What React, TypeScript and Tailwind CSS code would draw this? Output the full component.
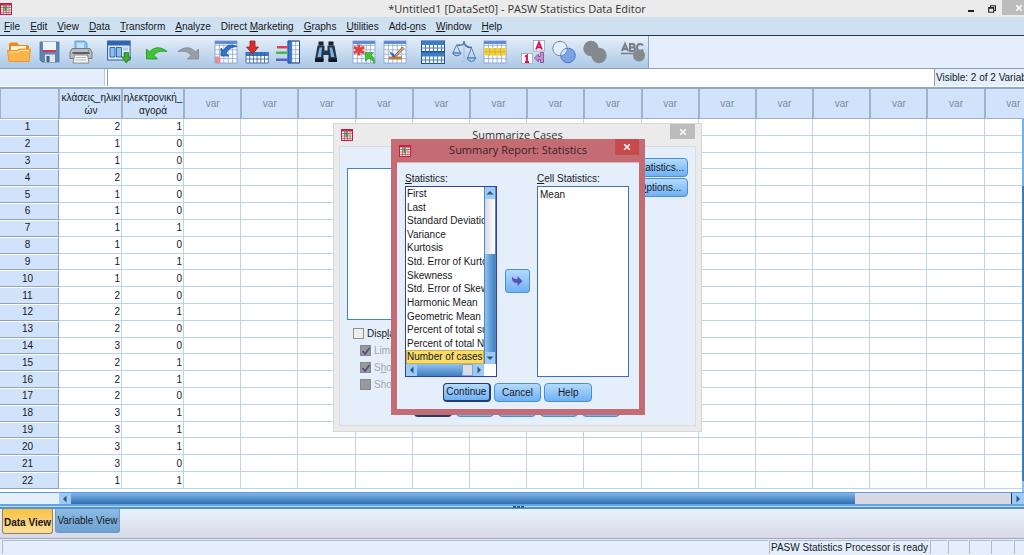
import type { ReactNode } from 'react';

const menus: [string, string, string][] = [
  ['', 'F', 'ile'],
  ['', 'E', 'dit'],
  ['', 'V', 'iew'],
  ['', 'D', 'ata'],
  ['', 'T', 'ransform'],
  ['', 'A', 'nalyze'],
  ['Direct ', 'M', 'arketing'],
  ['', 'G', 'raphs'],
  ['', 'U', 'tilities'],
  ['Add-', 'o', 'ns'],
  ['', 'W', 'indow'],
  ['', 'H', 'elp'],
];

const data: [number, number][] = [
  [2, 1], [1, 0], [1, 0], [2, 0], [1, 0], [1, 0], [1, 1], [1, 0], [1, 1], [1, 0], [2, 0],
  [2, 1], [2, 0], [3, 0], [2, 1], [2, 1], [2, 0], [3, 1], [3, 1], [3, 1], [3, 0], [1, 1],
];

const statistics = [
  'First', 'Last', 'Standard Deviation', 'Variance', 'Kurtosis', 'Std. Error of Kurtosis', 'Skewness',
  'Std. Error of Skewness', 'Harmonic Mean', 'Geometric Mean', 'Percent of total sum', 'Percent of total N',
  'Number of cases',
];

const emptyColumns = Array.from({ length: 15 }, (_, i) => i);

function Icon({ children }: { children: ReactNode }) {
  return (
    <svg viewBox="0 0 24 24" className="h-6 w-6" aria-hidden="true">
      {children}
    </svg>
  );
}

function Grid({ x = 1, y = 1, w = 22, h = 22, header = true }: { x?: number; y?: number; w?: number; h?: number; header?: boolean }) {
  const cols = Math.round(w / 4.4);
  const rows = Math.round(h / 4.4);
  return (
    <g>
      <rect x={x} y={y} width={w} height={h} fill="#fff" stroke="#7d9bd0" strokeWidth="0.8" />
      {Array.from({ length: cols - 1 }, (_, i) => (
        <path key={'c' + i} d={`M${x + ((i + 1) * w) / cols} ${y}v${h}`} stroke="#8ba6d6" strokeWidth="0.8" />
      ))}
      {Array.from({ length: rows - 1 }, (_, i) => (
        <path key={'r' + i} d={`M${x} ${y + ((i + 1) * h) / rows}h${w}`} stroke="#8ba6d6" strokeWidth="0.8" />
      ))}
      {header && <rect x={x} y={y} width={w} height="3" fill="#5f8bd8" />}
    </g>
  );
}

const OpenIcon = (
  <Icon>
    <path d="M2 4.500q0-2 2-2h6l2 2.500h8q2 0 2 2V20H2z" fill="#e88a1a" />
    <path d="M4 6h15v6H4z" fill="#fff3d0" />
    <path d="M0.500 10.500h9.500l2-1.500h11.500L22 21.500H2z" fill="#fdb549" stroke="#e58a1c" strokeWidth="0.8" />
    <path d="M2.500 12h9l2-1.500h8.500" stroke="#ffe3a0" fill="none" />
  </Icon>
);
const SaveIcon = (
  <Icon>
    <path d="M2 2h19v20H4l-2-2z" fill="#5d86b4" stroke="#4b6f9b" strokeWidth="0.8" />
    <path d="M5 2h13v9H5z" fill="#eef3f8" />
    <path d="M5 10h13v2H5z" fill="#d8344c" />
    <path d="M7 14.500h10V22H7z" fill="#dfe5ea" />
    <path d="M8.500 16h3v6h-3z" fill="#3e5f88" />
  </Icon>
);
const PrintIcon = (
  <Icon>
    <path d="M6 1h10l2 2v7H6z" fill="#8cc4f2" stroke="#4c94d2" strokeWidth="0.8" />
    <path d="M8 3h7v5H8z" fill="#c4e3fb" />
    <path d="M3 8.500h18l2 3.500v6.500H1V12z" fill="#b9bcc0" stroke="#65696e" strokeWidth="0.8" />
    <path d="M3.500 12h17v2h-17z" fill="#5d6166" />
    <path d="M5.500 15h13l1.500 8H4z" fill="#f6f7f8" stroke="#777" strokeWidth="0.8" />
    <path d="M7 17.500h10M6.500 20h11" stroke="#9aa" strokeWidth="0.8" />
    <circle cx="19.500" cy="10.500" r="0.800" fill="#3da53d" />
  </Icon>
);
const RecallIcon = (
  <Icon>
    <rect x="0.600" y="1" width="22.500" height="19" fill="#dcecfb" stroke="#2c5aa0" />
    <path d="M0.600 1h22.500v4.500H0.600z" fill="#2e66b4" />
    <path d="M3 7.500h5v9.500H3zM9.500 7.500h5v9.500h-5z" fill="#8fbef2" stroke="#2c5aa0" strokeWidth="0.9" />
    <path d="M16 7.500h5v3h-5z" fill="#a9cdf3" />
    <path d="M17 12.500h4.500V17h2.300l-4.500 6-4.600-6H17z" fill="#3fae35" stroke="#247a20" strokeWidth="0.8" />
  </Icon>
);
const UndoIcon = (
  <Icon>
    <path d="M1.500 9l3 3C9 6.500 16 6.500 22 11.500 16 10.500 11 11.500 9 15.500l3.500 3.500h-11z" fill="#43c235" stroke="#2a9626" strokeWidth="0.9" strokeLinejoin="round" />
  </Icon>
);
const RedoIcon = (
  <Icon>
    <path d="M22.500 9l-3 3C15 6.500 8 6.500 2 11.500 8 10.500 13 11.500 15 15.500L11.500 19h11z" fill="#9a9fa5" stroke="#858a90" strokeWidth="0.9" strokeLinejoin="round" />
  </Icon>
);
const GoToCaseIcon = (
  <Icon>
    <Grid />
    <path d="M1 16.500h5.500V23H1z" fill="#e98b92" />
    <path d="M7 8v8h8l-3-2.500C14 9 18 7 23 6.500 17 3.500 12 5 9.500 10.500z" fill="#2f74cf" stroke="#1b4f9e" strokeWidth="0.7" />
  </Icon>
);
const GoToVariableIcon = (
  <Icon>
    <rect x="1" y="12" width="22.500" height="11" fill="#fff" />
    <path d="M1 12h22.500v3.500H1z" fill="#3a78cf" />
    <path d="M1 15.500h22.500M1 19h22.500M1 23h22.500M1 12v11M4.700 12v11M8.400 12v11M12.100 12v11M15.800 12v11M19.500 12v11M23.300 12v11" stroke="#2c5aa0" strokeWidth="0.8" />
    <path d="M5 1h5v6h3.500l-6 7-6-7H5z" fill="#d5302b" stroke="#9d1a17" strokeWidth="0.8" />
  </Icon>
);
const VariablesIcon = (
  <Icon>
    <Grid x={12} y={1} w={11.5} h={22} header={false} />
    <path d="M12 1h4v22h-4z" fill="#3a78cf" />
    <path d="M12 1h11.500v22H12z" fill="none" stroke="#1f4f96" />
    <path d="M1 6h11v2.500H1z" fill="#d9405a" />
    <path d="M0 11.500h12V14H0z" fill="#4db848" />
    <path d="M0 18.500h12V21H0z" fill="#5a62c4" />
  </Icon>
);
const FindIcon = (
  <Icon>
    <path d="M4.500 1.500h5v4h-5zM14.500 1.500h5v4h-5z" fill="#1a2430" />
    <path d="M3.500 5.500h7v5h3v-5h7l2.500 14V21h-8.500v-6h-5v6H1v-1.500z" fill="#25364a" />
    <path d="M5.500 7.500H8L7 17H3.500zM15.500 7.500H18l2.500 9.500H17z" fill="#7fb2e6" />
    <path d="M1 18.500h8.500V22H1zM14.500 18.500H23V22h-8.500z" fill="#10161e" />
  </Icon>
);
const InsertCasesIcon = (
  <Icon>
    <Grid />
    <path d="M7 4.500v11M1.800 7l10.400 6M12.200 7L1.800 13" stroke="#e5423d" strokeWidth="2.800" />
    <path d="M13 12.500h8.500l-2.500 2.500c3 1.500 4 4.500 3 8.500-1-3-3-4.500-5.500-5L13.500 21z" fill="#43c235" stroke="#2a9626" strokeWidth="0.7" />
  </Icon>
);
const InsertVariableIcon = (
  <Icon>
    <Grid />
    <path d="M6 19.500h13v-3H6z" fill="#c47d23" />
    <path d="M9.500 17L6 11l4.500 2.500 2 3.500z" fill="#3a68c9" />
    <path d="M19.500 7l-7 7.500-1.500 2.500 2.500-1L21 8.500z" fill="#f0b040" stroke="#5a4a8a" strokeWidth="0.8" />
  </Icon>
);
const SplitIcon = (
  <Icon>
    <rect x="0.500" y="1" width="23" height="10.500" fill="#f4f8ff" stroke="#1f4f96" />
    <path d="M0.500 1h23v4h-23z" fill="#3f7cc8" />
    <rect x="0.500" y="12.500" width="23" height="11" fill="#f4f8ff" stroke="#1f4f96" />
    <path d="M0.500 12.500h23v4h-23z" fill="#3f7cc8" />
    <path d="M0.500 8h23M0.500 20h23M4.500 5v6.500M8.500 5v6.500M12.500 5v6.500M16.500 5v6.500M20.500 5v6.500M4.500 16.500v7M8.500 16.500v7M12.500 16.500v7M16.500 16.500v7M20.500 16.500v7" stroke="#3c6fb8" strokeWidth="0.9" />
  </Icon>
);
const WeightIcon = (
  <Icon>
    <path d="M12 1v3M4.500 5q5 1 7.500-1.500Q15 8 20 7.500" fill="none" stroke="#4474a8" strokeWidth="1.600" />
    <path d="M4.500 5L1 13h7.500zM19.500 8l-4 10h8z" fill="none" stroke="#5a86b6" strokeWidth="1" />
    <path d="M0.500 13h8.800q-1.500 2.800-4.400 2.800T0.500 13zM15 18h8.800q-1.500 3.500-4.400 3.500T15 18z" fill="#a9cbea" stroke="#4474a8" strokeWidth="1" />
    <path d="M12 4v15.500M9 21h6" stroke="#9cbbdc" strokeWidth="0.9" />
  </Icon>
);
const SelectCasesIcon = (
  <Icon>
    <Grid />
    <path d="M1 8h22v7.500H1z" fill="#f0d040" />
    <path d="M1 11.800h22M6.500 8v7.500M12 8v7.500M17.500 8v7.500" stroke="#c9a72a" strokeWidth="0.7" />
  </Icon>
);
const ValueLabelsIcon = (
  <Icon>
    <rect x="12.500" y="0.500" width="11" height="10.500" fill="#fff" stroke="#99a7ba" strokeWidth="0.8" />
    <path d="M15 9.500l3-7 3 7M16 7.300h4" fill="none" stroke="#d4145a" strokeWidth="1.900" />
    <rect x="0.500" y="13.500" width="11" height="10" fill="#fff" stroke="#99a7ba" strokeWidth="0.8" />
    <path d="M4 16.800l2-1.300v6.500M4 22h4" fill="none" stroke="#d4145a" strokeWidth="1.900" />
    <path d="M22.500 12.500v10h-3v-3h-2v2.500l-4-4 4-4v2.500h2v-4z" fill="#c490cc" stroke="#8e4f9c" strokeWidth="0.9" />
  </Icon>
);
const UseSetsIcon = (
  <Icon>
    <circle cx="8" cy="8.500" r="7.200" fill="#eef4fb" fillOpacity="0.7" stroke="#7a8da8" />
    <circle cx="16" cy="15.500" r="7.300" fill="#6c95e2" fillOpacity="0.8" stroke="#4d78c6" />
    <path d="M9 15.200a7 7 0 0 0 5.800-6.400A7.300 7.300 0 0 0 9 15.200z" fill="#dce8f8" />
  </Icon>
);
const ShowAllIcon = (
  <Icon>
    <circle cx="8" cy="8.500" r="7.700" fill="#85898e" />
    <circle cx="16" cy="15.500" r="7.700" fill="#85898e" />
  </Icon>
);
const SpellIcon = (
  <Icon>
    <path d="M1 11l3-7 3 7M2 9h4M9 4v7h3q2 0 2-1.800T12 7.500H9h2.500q2 0 2-1.700T11.500 4zM22 5.500Q21 4 19 4q-3 0-3 3.500T19 11q2 0 3-1.500" fill="none" stroke="#7b7f85" strokeWidth="2" />
    <path d="M0 13.500h14" stroke="#7b7f85" strokeWidth="1.500" />
    <circle cx="18" cy="15.500" r="6" fill="#85898e" />
  </Icon>
);

const toolGroups: { label: string; icon: ReactNode; disabled?: boolean }[][] = [
  [
    { label: 'Open', icon: OpenIcon },
    { label: 'Save', icon: SaveIcon },
    { label: 'Print', icon: PrintIcon },
  ],
  [{ label: 'Recall dialog', icon: RecallIcon }],
  [
    { label: 'Undo', icon: UndoIcon },
    { label: 'Redo', icon: RedoIcon, disabled: true },
  ],
  [
    { label: 'Go to case', icon: GoToCaseIcon },
    { label: 'Go to variable', icon: GoToVariableIcon },
    { label: 'Variables', icon: VariablesIcon },
  ],
  [{ label: 'Find', icon: FindIcon }],
  [
    { label: 'Insert cases', icon: InsertCasesIcon },
    { label: 'Insert variable', icon: InsertVariableIcon },
  ],
  [
    { label: 'Split file', icon: SplitIcon },
    { label: 'Weight cases', icon: WeightIcon },
    { label: 'Select cases', icon: SelectCasesIcon },
  ],
  [
    { label: 'Value labels', icon: ValueLabelsIcon },
    { label: 'Use variable sets', icon: UseSetsIcon },
    { label: 'Show all variables', icon: ShowAllIcon, disabled: true },
  ],
  [{ label: 'Spell check', icon: SpellIcon, disabled: true }],
];

function AppIcon() {
  return (
    <svg viewBox="0 0 12 12" className="h-3 w-3 shrink-0" aria-hidden="true">
      <rect x="0.500" y="0.500" width="11" height="11" fill="#fff" stroke="#c01f45" />
      <path d="M0 1.500h12" stroke="#c01f45" strokeWidth="2" />
      <path d="M3.500 1v10M6.500 1v10M9 1v10M1 4.500h10M1 7h10M1 9.500h10" stroke="#cf4a68" strokeWidth="0.8" />
      <path d="M4.500 8.500v-3h-2L5.500 2l3 3.500h-2v3z" fill="#4b9a4b" />
    </svg>
  );
}

function Cross() {
  return (
    <svg viewBox="0 0 8 8" className="h-2 w-2" aria-hidden="true">
      <path d="M1.200 1.200l5.600 5.600M6.800 1.200L1.200 6.800" stroke="#fff" strokeWidth="1.500" />
    </svg>
  );
}

function Arrow({ d }: { d: string }) {
  return (
    <svg viewBox="0 0 8 8" className="h-2 w-2" aria-hidden="true">
      <path d={d} fill="#33527c" />
    </svg>
  );
}
const LEFT = 'M5.500 0.500v7L2 4z';
const RIGHT = 'M2.500 0.500v7L6 4z';
const UP = 'M0.500 5.500h7L4 2z';
const DOWN = 'M0.500 2.500h7L4 6z';

function PushButton({ children, isDefault, label }: { children?: ReactNode; isDefault?: boolean; label?: string }) {
  return (
    <button
      type="button"
      aria-label={label}
      className={
        'h-[19px] rounded-[4px] border bg-linear-to-b from-[#b4dbfc] to-[#6fb0f4] text-center leading-[16px] whitespace-nowrap ' +
        (isDefault ? 'border-r-2 border-b-2 border-[#1d3f73]' : 'border-[#4a8fd6]')
      }
    >
      {children}
    </button>
  );
}

function Option({ label, checked, disabled }: { label: ReactNode; checked?: boolean; disabled?: boolean }) {
  return (
    <label className={'flex h-[17px] items-center gap-[3px] whitespace-nowrap ' + (disabled ? 'ml-[7px] text-[#a3a6aa]' : '')}>
      <span className="grid h-[11px] w-[11px] shrink-0 place-items-center">
        <input
          type="checkbox"
          defaultChecked={checked}
          disabled={disabled}
          className={
            'col-start-1 row-start-1 h-[11px] w-[11px] appearance-none border ' +
            (disabled ? 'border-[#85888c] bg-[#96999d]' : 'border-[#8e8f8f] bg-[#eeeeea]')
          }
        />
        {checked && (
          <svg viewBox="0 0 10 10" className="pointer-events-none col-start-1 row-start-1 h-[10px] w-[10px]" aria-hidden="true">
            <path d="M1.500 5l2.500 3L8.500 2" fill="none" stroke="#4e4a78" strokeWidth="1.600" />
          </svg>
        )}
      </span>
      <span>{label}</span>
    </label>
  );
}

function SummarizeDialog() {
  return (
    <section
      aria-label="Summarize Cases"
      className="absolute top-[123px] left-[333px] flex h-[309px] w-[369px] flex-col border border-[#d8d8d8] bg-[#ebebeb] px-[5px] pb-[5px]"
    >
      <header className="grid h-[22px] shrink-0 grid-cols-[26px_1fr_26px]">
        <span className="flex items-center pl-[2px]">
          <AppIcon />
        </span>
        <h2 className="text-center font-['Open_Sans',sans-serif] text-[11px] leading-[22px] text-[#333]">Summarize Cases</h2>
        <button type="button" aria-label="Close" className="grid h-[15px] w-[25px] place-items-center bg-[#bcbcbc]">
          <Cross />
        </button>
      </header>
      <div className="flex flex-1 flex-col border border-[#dcdcdc] bg-[#e4effb] px-[7px]">
        <div className="flex justify-between">
          <div className="mt-[21px] h-[152px] w-[180px] border border-[#3f83c8] bg-white" />
          <div className="mt-[11px] grid h-[39px] w-[56px] gap-px">
            <PushButton>
              <u>S</u>tatistics...
            </PushButton>
            <PushButton>
              <u>O</u>ptions...
            </PushButton>
          </div>
        </div>
        <div className="mt-[5px] flex flex-1 flex-col pl-[6px]">
          <Option label={<>Disp<u>l</u>ay cases</>} />
          <Option label="Limit cases to first" checked disabled />
          <Option label={<>S<u>h</u>ow only valid cases</>} checked disabled />
          <Option label="Show case numbers" disabled />
        </div>
        <div className="mb-[8px] grid grid-cols-5 gap-[4px] pr-[68px] pl-[67px]">
          <PushButton label="OK" isDefault />
          <PushButton label="Paste" />
          <PushButton label="Reset" />
          <PushButton label="Cancel" />
          <PushButton label="Help" />
        </div>
      </div>
    </section>
  );
}

function StatisticsDialog() {
  return (
    <section
      aria-label="Summary Report: Statistics"
      className="absolute top-[139px] left-[391px] flex h-[276px] w-[254px] flex-col bg-[#c46c74] px-[6px] pb-[6px]"
    >
      <header className="grid h-[23px] shrink-0 grid-cols-[24px_1fr_24px]">
        <span className="flex items-center pl-[2px]">
          <AppIcon />
        </span>
        <h2 className="text-center font-['Open_Sans',sans-serif] text-[11px] leading-[22px] whitespace-nowrap text-[#3b2226]">
          Summary Report: Statistics
        </h2>
        <button type="button" aria-label="Close" className="grid h-[16px] w-[24px] place-items-center bg-[#c84a4c]">
          <Cross />
        </button>
      </header>
      <div className="flex flex-1 flex-col border-t border-[#d9b3b8] bg-[#e4effb] pt-[9px] pr-[10px] pl-[8px]">
        <div className="flex">
          <div className="flex w-[92px] flex-col">
            <span id="available" className="h-[14px] leading-[14px]">
              <u>S</u>tatistics:
            </span>
            <div className="flex h-[191px] flex-col border border-[#3b3ba8] bg-white">
              <div className="flex flex-1">
                <ul role="listbox" aria-labelledby="available" className="grid min-w-0 flex-1 auto-rows-fr">
                  {statistics.map((name) => (
                    <li
                      key={name}
                      role="option"
                      aria-selected={name === 'Number of cases'}
                      className={
                        'overflow-hidden pl-px leading-[13px] whitespace-nowrap ' +
                        (name === 'Number of cases' ? 'bg-[#f7dc6a] outline -outline-offset-1 outline-[#cdb04a]' : '')
                      }
                    >
                      {name}
                    </li>
                  ))}
                </ul>
                <div className="flex w-[12px] flex-col border-x border-[#4f8ac8]">
                  <span className="grid h-[12px] place-items-center bg-[#9ccbf6]">
                    <Arrow d={UP} />
                  </span>
                  <span className="h-[55px] bg-linear-to-r from-[#dcd8e4] to-white" />
                  <span className="flex-1 bg-linear-to-r from-[#8fc2f0] to-[#3f7fc0]" />
                  <span className="grid h-[12px] place-items-center bg-[#9ccbf6]">
                    <Arrow d={DOWN} />
                  </span>
                </div>
              </div>
              <div className="flex h-[12px] pr-[12px]">
                <span className="grid w-[11px] place-items-center bg-[#9ccbf6]">
                  <Arrow d={LEFT} />
                </span>
                <span className="flex-1 bg-linear-to-b from-[#8fc2f0] to-[#3f7fc0]" />
                <span className="w-[11px] border border-[#7aa9da] bg-[#dcdce6]" />
                <span className="grid w-[11px] place-items-center bg-[#9ccbf6]">
                  <Arrow d={RIGHT} />
                </span>
              </div>
            </div>
          </div>
          <div className="flex flex-1 items-center justify-center pt-[13px]">
            <button
              type="button"
              aria-label="Move to cell statistics"
              className="grid h-[24px] w-[25px] place-items-center rounded-[3px] border border-[#4a8fd6] bg-linear-to-b from-[#b4dbfc] to-[#6fb0f4]"
            >
              <svg viewBox="0 0 12 12" className="h-3 w-3" aria-hidden="true">
                <path d="M1 1q1 3.500 5.500 3V1L11.500 6l-5 5V8Q0 8.500 1 1z" fill="#5a50b8" />
              </svg>
            </button>
          </div>
          <div className="flex w-[92px] flex-col">
            <span id="chosen" className="h-[14px] leading-[14px]">
              <u>C</u>ell Statistics:
            </span>
            <ul role="listbox" aria-labelledby="chosen" className="h-[191px] border border-[#3f6fb4] bg-white px-[2px] pt-px">
              <li role="option" aria-selected="false" className="leading-[14px]">
                Mean
              </li>
            </ul>
          </div>
        </div>
        <div className="mt-[6px] grid grid-cols-3 gap-[3px] pr-[37px] pl-[38px]">
          <PushButton isDefault>Continue</PushButton>
          <PushButton>Cancel</PushButton>
          <PushButton>Help</PushButton>
        </div>
      </div>
    </section>
  );
}

function DataGrid() {
  const head = 'h-[30px] overflow-hidden border-x border-b border-[#9fb2ca] bg-[#d0e3fb] p-0 font-normal';
  return (
    <div className="relative flex min-h-0 flex-1 overflow-hidden bg-white">
      <table className="h-[400px] w-[calc(100%+18px)] shrink-0 table-fixed border-separate border-spacing-0">
        <colgroup>
          <col className="w-[59px]" />
          <col className="w-[63px]" />
          <col className="w-[62px]" />
        </colgroup>
        <thead>
          <tr>
            <th className={head} aria-label="Case" />
            <th scope="col" className={head + ' leading-[13px]'}>
              <div className="overflow-hidden pl-px whitespace-nowrap">κλάσεις_ηλικι<br />ών</div>
            </th>
            <th scope="col" className={head + ' leading-[13px]'}>
              <div className="overflow-hidden whitespace-nowrap">ηλεκτρονική_<br />αγορά</div>
            </th>
            {emptyColumns.map((c) => (
              <th key={c} scope="col" className={head + ' text-[#7c8ba0]'}>
                var
              </th>
            ))}
          </tr>
        </thead>
        <tbody>
          {data.map(([a, b], i) => (
            <tr key={i}>
              <th scope="row" className="border-t border-r border-b border-t-white border-r-[#8fa3bd] border-b-[#8fa3bd] bg-[#d0e3fb] p-0 pr-[3px] leading-[14px] font-normal">
                {i + 1}
              </th>
              <td className="border-r border-b border-[#bcd3ea] p-0 pt-px pr-px text-right leading-[14px]">{a}</td>
              <td className="border-r border-b border-[#bcd3ea] p-0 pt-px pr-px text-right leading-[14px]">{b}</td>
              {emptyColumns.map((c) => (
                <td key={c} className="border-r border-b border-[#bcd3ea] p-0" />
              ))}
            </tr>
          ))}
        </tbody>
      </table>
      <div className="absolute top-[30px] right-0 bottom-0 flex w-[2px] flex-col">
        <span className="h-[67px] bg-[#6fb2f2]" />
        <span className="flex-1 bg-[#3b7cbd]" />
        <span className="h-[11px] bg-[#8cc1f4]" />
      </div>
    </div>
  );
}

export default function App() {
  return (
    <div className="relative flex h-screen flex-col overflow-hidden bg-[#e4effb] font-['Liberation_Sans',Arial,sans-serif] text-[10px] text-[#15181d]">
      <header className="grid h-[17px] shrink-0 grid-cols-[80px_1fr_70px] bg-[#ebebeb]">
        <span className="flex items-center">
          <AppIcon />
        </span>
        <h1 className="text-center font-['Open_Sans',sans-serif] text-[11px] leading-[17px] text-[#333]">
          *Untitled1 [DataSet0] - PASW Statistics Data Editor
        </h1>
        <div className="flex">
          <button type="button" aria-label="Minimize" className="grid w-[28px] place-items-center pt-[4px] pl-[6px]">
            <span className="h-[2px] w-[6px] bg-[#222]" />
          </button>
          <button type="button" aria-label="Restore" className="grid w-[20px] place-items-center">
            <svg viewBox="0 0 8 8" className="h-2 w-2" aria-hidden="true">
              <path d="M2.500 2V0.800h5v4.700H6M0.700 2.500h5v4.800h-5zM0.700 3.300h5" fill="none" stroke="#222" strokeWidth="1.100" />
            </svg>
          </button>
          <button type="button" aria-label="Close" className="flex h-[15px] flex-1 items-center justify-end bg-[#bcbcbc] pr-px">
            <Cross />
          </button>
        </div>
      </header>

      <nav className="flex h-[19px] shrink-0 items-center gap-[10px] border-b border-[#27384d] bg-[#cfe0f1] pl-[4px]">
        {menus.map(([before, key, after]) => (
          <button key={key + after} type="button" className="whitespace-nowrap">
            {before}
            <u>{key}</u>
            {after}
          </button>
        ))}
      </nav>

      <div className="flex h-[33px] shrink-0 border-b border-[#8f9fb3]">
        <div className="flex items-center gap-[7px] border-r border-[#8fa6c2] bg-linear-to-b from-[#e6f0fa] to-[#abc8e6] pl-[3px]">
          {toolGroups.map((group) => (
            <div key={group[0].label} className="flex">
              {group.map((tool) => (
                <button key={tool.label} type="button" aria-label={tool.label} disabled={tool.disabled} className="grid w-[31px] place-items-center">
                  {tool.icon}
                </button>
              ))}
            </div>
          ))}
        </div>
      </div>

      <div className="flex h-[20px] shrink-0 items-start border-b-2 border-[#8ea9c8] bg-white">
        <div className="h-[17px] w-[105px] border-r border-[#b9c8da] bg-[#e4effb]" />
        <input aria-label="Cell value" className="ml-[2px] h-[17px] min-w-0 flex-1 border-l border-[#8f9fb3] bg-white px-1 outline-none" />
        <div className="ml-[2px] h-[17px] w-[90px] overflow-hidden border-l border-[#8f9fb3] bg-[#e4effb] pl-px leading-[18px] whitespace-nowrap">
          Visible: 2 of 2 Variables
        </div>
      </div>

      <DataGrid />

      <div className="flex h-[12px] shrink-0 border-t border-[#5b9be0] pl-[59px]">
        <span className="grid w-[12px] place-items-center bg-[#9ccbf6]">
          <Arrow d={LEFT} />
        </span>
        <span className="flex-[785] bg-linear-to-b from-[#7fb6ea] to-[#2f6fae]" />
        <span className="flex-[156] border-r border-[#27384d] bg-[#d9d9e4]" />
        <span className="grid w-[12px] place-items-center bg-[#9ccbf6]">
          <Arrow d={RIGHT} />
        </span>
      </div>
      <div className="flex h-[5px] shrink-0 items-center justify-center gap-px border-t-2 border-b-2 border-t-[#62a3e6] border-b-[#5590d0] bg-[#b5dcf8] pl-[12px]">
        <span className="h-[2px] w-[3px] bg-[#2c5aa0]" />
        <span className="h-[2px] w-[3px] bg-[#2c5aa0]" />
        <span className="h-[2px] w-[3px] bg-[#2c5aa0]" />
      </div>

      <div role="tablist" className="flex h-[29px] shrink-0 items-start gap-[2px] bg-linear-to-b from-[#e8f3fd] to-[#d9d9e6] pl-[2px]">
        <button type="button" role="tab" aria-selected="true" className="h-[25px] w-[51px] rounded-b-[3px] border border-t-0 border-[#8c8468] bg-linear-to-b from-[#fcc03c] to-[#fbdf9a] pt-[2px] text-center font-bold whitespace-nowrap">
          <span className="-mx-1">Data View</span>
        </button>
        <button type="button" role="tab" aria-selected="false" className="h-[24px] w-[65px] rounded-b-[3px] border border-t-0 border-[#6d9ac6] bg-linear-to-b from-[#8cbbe4] to-[#6ca1d2] text-center whitespace-nowrap">
          Variable View
        </button>
      </div>

      <footer className="flex h-[17px] shrink-0 border-t border-[#9aa8ba] bg-[#e4effb] py-px pl-[2px] leading-[14px] *:border-t *:border-l *:border-[#b0bccb]">
        <div className="mr-px flex-1" />
        <div className="mr-px w-[160px] pl-px whitespace-nowrap">PASW Statistics Processor is ready</div>
        <div className="mr-px w-[17px]" />
        <div className="mr-px w-[20px]" />
        <div className="mr-px w-[21px]" />
        <div className="mr-px w-[22px]" />
        <div className="w-[10px]" />
      </footer>

      <SummarizeDialog />
      <StatisticsDialog />
    </div>
  );
}
